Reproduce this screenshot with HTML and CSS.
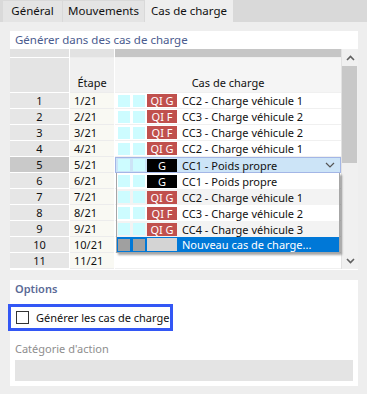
FILE: index.html
```html
<!DOCTYPE html>
<html lang="fr">
<head>
<meta charset="utf-8">
<link rel="stylesheet" href="styles.css">
</head>
<body>
<div class="tabs">
  <div class="tab t1">Général</div>
  <div class="tab t2">Mouvements</div>
  <div class="tab t3 active">Cas de charge</div>
</div>
<div class="page">
  <section class="group gen">
    <div class="gtitle">Générer dans des cas de charge</div>
    <div class="gridwrap">
      <div class="table">
        <div class="row hrow1"><div class="c1"></div><div class="c2"></div><div class="c3"></div></div>
        <div class="row hrow2"><div class="c1"></div><div class="c2">Étape</div><div class="c3">Cas de charge</div></div>
        <div class="row"><div class="c1">1</div><div class="c2">1/21</div><div class="c3"><span class="sq"></span><span class="sq"></span><span class="badge red">QI G</span><span class="lc">CC2 - Charge véhicule 1</span></div></div>
        <div class="row"><div class="c1">2</div><div class="c2">2/21</div><div class="c3"><span class="sq"></span><span class="sq"></span><span class="badge red">QI F</span><span class="lc">CC3 - Charge véhicule 2</span></div></div>
        <div class="row"><div class="c1">3</div><div class="c2">3/21</div><div class="c3"><span class="sq"></span><span class="sq"></span><span class="badge red">QI F</span><span class="lc">CC3 - Charge véhicule 2</span></div></div>
        <div class="row"><div class="c1">4</div><div class="c2">4/21</div><div class="c3"><span class="sq"></span><span class="sq"></span><span class="badge red">QI G</span><span class="lc">CC2 - Charge véhicule 1</span></div></div>
        <div class="row sel"><div class="c1">5</div><div class="c2">5/21</div><div class="c3 edit"><span class="sq"></span><span class="sq"></span><span class="badge black">G</span><span class="lc">CC1 - Poids propre</span><svg class="chev" width="10" height="6" viewBox="0 0 10 6"><path d="M1 1 L5 5 L9 1" fill="none" stroke="#555" stroke-width="1.2"/></svg></div></div>
        <div class="row"><div class="c1">6</div><div class="c2">6/21</div><div class="c3"></div></div>
        <div class="row"><div class="c1">7</div><div class="c2">7/21</div><div class="c3"></div></div>
        <div class="row"><div class="c1">8</div><div class="c2">8/21</div><div class="c3"></div></div>
        <div class="row"><div class="c1">9</div><div class="c2">9/21</div><div class="c3"></div></div>
        <div class="row"><div class="c1">10</div><div class="c2">10/21</div><div class="c3"></div></div>
        <div class="row"><div class="c1">11</div><div class="c2">11/21</div><div class="c3"></div></div>
        <div class="dropdown">
          <div class="item"><span class="sq"></span><span class="sq"></span><span class="badge black">G</span><span class="lc">CC1 - Poids propre</span></div>
          <div class="item alt"><span class="sq"></span><span class="sq"></span><span class="badge red">QI G</span><span class="lc">CC2 - Charge véhicule 1</span></div>
          <div class="item"><span class="sq"></span><span class="sq"></span><span class="badge red">QI F</span><span class="lc">CC3 - Charge véhicule 2</span></div>
          <div class="item alt"><span class="sq"></span><span class="sq"></span><span class="badge red">QI G</span><span class="lc">CC4 - Charge véhicule 3</span></div>
          <div class="item hot"><span class="sq"></span><span class="sq"></span><span class="badge blank"></span><span class="lc">Nouveau cas de charge...</span></div>
        </div>
      </div>
      <div class="scrollbar">
        <div class="arrow"><svg width="9" height="6" viewBox="0 0 9 6"><path d="M1 5 L4.5 1.5 L8 5" fill="none" stroke="#606060" stroke-width="1.6"/></svg></div>
        <div class="thumb"></div>
        <div class="track"></div>
        <div class="arrow"><svg width="9" height="6" viewBox="0 0 9 6"><path d="M1 1 L4.5 4.5 L8 1" fill="none" stroke="#606060" stroke-width="1.6"/></svg></div>
      </div>
    </div>
  </section>
  <section class="group opts">
    <div class="gtitle bold">Options</div>
    <div class="focus"><span class="cb"></span><span>Générer les cas de charge</span></div>
    <div class="flabel">Catégorie d'action</div>
    <div class="finput"></div>
  </section>
</div>
</body>
</html>
```
FILE: styles.css
```css
* { box-sizing: border-box; }
html, body { margin: 0; padding: 0; }
body {
  width: 367px;
  height: 394px;
  overflow: hidden;
  background: #eeeeee;
  font-family: "Noto Sans", "Segoe UI", sans-serif;
  font-size: 11px;
  color: #111;
}
.tabs {
  height: 22px;
  background: #d9d9d9;
  display: flex;
  align-items: flex-end;
  padding-left: 3px;
}
.tab {
  height: 21px;
  background: #e4e4e4;
  line-height: 20px;
  margin-right: 1px;
  white-space: nowrap;
  text-align: center;
  font-size: 11.5px;
}
.t1 { width: 59px; }
.t2 { width: 81px; }
.t3 { width: 88px; }
.tab.active {
  height: 22px;
  background: #eeeeee;
  line-height: 22px;
}
.page {
  padding: 9px 9px 0 10px;
}
.group {
  background: #fff;
  width: 348px;
}
.gtitle {
  height: 18px;
  line-height: 18px;
  padding-left: 5px;
  color: #4a5b8e;
  font-size: 11.5px;
}
.gtitle.bold { font-weight: 600; color: #5a6996; font-size: 11px; }
.gen { padding-bottom: 1px; }
.gridwrap { display: flex; }
.table {
  position: relative;
  width: 332px;
  background: #fff;
  border-right: 1px solid #e2e2e2;
}
.row {
  display: flex;
  height: 16px;
  gap: 1px;
}
.row > div {
  height: 16px;
  line-height: 15px;
  border-bottom: 1px solid #fff;
  white-space: nowrap;
}
.c1 { width: 59px; background: #e6e6e6; text-align: center; }
.c2 { width: 44px; background: #f9f9f3; padding-left: 4px; border-bottom-color: #ececec !important; }
.c3 {
  width: 226px;
  background: #fff;
  display: flex;
  align-items: center;
  padding-left: 3px;
  border-bottom-color: #f0f0f0 !important;
}
.row.hrow1 { height: 9px; }
.hrow1 > div { height: 9px; background: #e2e2e2; }
.hrow1 > .c3 { background: #c6c6c6; }
.row.hrow2 { height: 35px; }
.hrow2 > div { height: 35px; line-height: 16px; padding-top: 17px; text-align: center; }
.hrow2 > .c1 { background: #e4e4e4; }
.hrow2 > .c2 { background: #f0f0f0; padding-left: 0; }
.hrow2 > .c3 { background: #f5f5f5; display: block; padding-left: 0; }
.row.sel > .c1 { background: #c9c9c9; }
.c3.edit {
  background: #cce4f7;
  border: 1px solid #a3b6e6 !important;
  padding-left: 2px;
  position: relative;
}
.chev { margin-left: auto; margin-right: 5px; }
.sq {
  display: inline-block;
  width: 12px;
  height: 12px;
  background: #cdfcff;
  margin-right: 3px;
  flex: none;
}
.sq + .sq { margin-right: 2px; }
.badge {
  display: inline-block;
  width: 30px;
  height: 13px;
  line-height: 13px;
  text-align: center;
  color: #fff;
  flex: none;
  font-size: 11px;
}
.badge.red { background: #c0504d; }
.badge.black { background: #000; }
.badge.blank { background: #d4d4d4; }
.lc { margin-left: 5px; }
.dropdown {
  position: absolute;
  left: 106px;
  top: 124px;
  width: 224px;
  border: 1px solid #a6a6a6;
  border-top: none;
  background: #fff;
  box-shadow: 2px 2px 2px rgba(0,0,0,0.35);
}
.item {
  height: 16px;
  display: flex;
  align-items: center;
  padding-left: 1px;
  white-space: nowrap;
}
.item.alt { background: #f3f3f3; }
.item.hot { background: #0078d7; color: #fff; height: 15px; }
.item.hot .sq { background: #a0a0a0; }
.scrollbar {
  width: 16px;
  height: 220px;
  background: #f0f0f0;
  display: flex;
  flex-direction: column;
}
.arrow {
  height: 17px;
  display: flex;
  align-items: center;
  justify-content: center;
}
.thumb { height: 97px; background: #c8c8c8; margin: 0 1px 0 0; }
.track { flex: 1; }
.opts {
  margin-top: 10px;
  height: 106px;
  display: flex;
  flex-direction: column;
}
.focus {
  margin: 6px 0 0 -2px;
  width: 165px;
  height: 27px;
  border: 3px solid #3357f5;
  display: flex;
  align-items: center;
  padding-left: 5px;
  gap: 7px;
  white-space: nowrap;
}
.cb {
  width: 13px;
  height: 13px;
  border: 1px solid #333;
  background: #fff;
  flex: none;
}
.flabel {
  margin-top: 10px;
  padding-left: 5px;
  color: #8e8e8e;
  line-height: 16px;
}
.finput {
  margin: 3px 5px 0 5px;
  height: 21px;
  background: #e4e4e4;
}
```
